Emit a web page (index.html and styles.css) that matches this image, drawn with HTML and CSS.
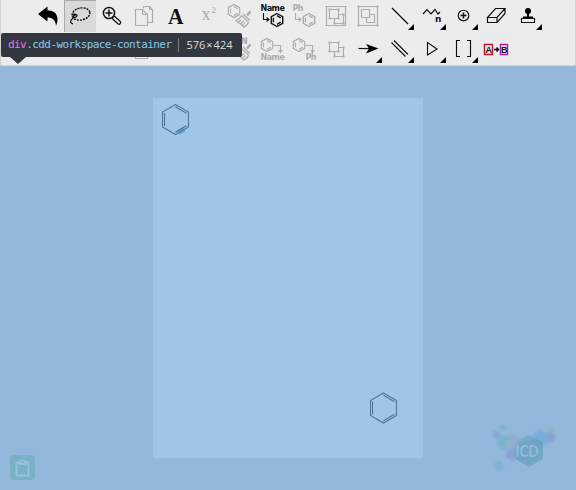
FILE: index.html
```html
<!DOCTYPE html>
<html lang="en">
<head>
<meta charset="utf-8">
<title>Chemical sketcher</title>
<link rel="stylesheet" href="styles.css">
</head>
<body>
<svg class="defs" width="0" height="0">
  <defs>
    <g id="hex"><path d="M0-6.500 5.700-3.300V3.300L0 6.500-5.700 3.300V-3.300Z"/><path d="M-3.600-2.200V2.200M0-4.400 3.700-2.200M0 4.400 3.700 2.200"/></g>
    <g id="pages"><path d="M15.500 8.500V6.500H21.500L24.500 9.500V22.500H20M21.500 6.500V9.500H24.500M7.500 9.500H14.500L19.500 14.500V25.500H7.500ZM14.500 9.500V14.500H19.500"/></g>
    <g id="broom"><path class="handle-bar" d="M26.500 11.500 23 15.500"/><path d="M19 14 26 20.500M17.500 15.500 24.500 22M17.500 15.500C16 18.500 14 20 12 20.500L20 27C22 26 24 24 24.500 22M14.500 22 17 20M16.500 24 20 20.500M18.500 25.500 21 22.500"/></g>
    <g id="nodes"><path d="M9.500 9.500H18.500V18.500H9.500ZM18.500 14.500H23.500V23.500H14.500V18.500"/><path class="dots" d="M8.500 8.500h2v2h-2zM17.500 8.500h2v2h-2zM8.500 17.500h2v2h-2zM17.500 17.500h2v2h-2zM22.500 13.500h2v2h-2zM22.500 22.500h2v2h-2zM13.500 22.500h2v2h-2z"/></g>
    <path id="more" class="solid" d="M30 24V30H24Z"/>
  </defs>
</svg>
<header class="toolbar">
  <div class="row">
    <button class="tool"><svg viewBox="0 0 32 32"><path class="solid" d="M6 14 15.500 6.500V10.500C24 10 28 17 24 26C24 20 20 17.500 15.500 17.500V21.500Z"/></svg></button>
    <button class="tool selected"><svg viewBox="0 0 32 32"><ellipse class="dash" cx="17" cy="14" rx="9" ry="6" transform="rotate(-12 17 14)"/><path d="M8 15C11 13 15 15 12 17C9 18 8 15 12 15M12 17C8 18 4 22 9 24"/></svg></button>
    <button class="tool"><svg viewBox="0 0 32 32"><path class="handle" d="M18 18 23 22.500"/><path class="handle-inner" d="M18 18 23 22.500"/><circle class="thick" cx="13" cy="13" r="5.600"/><path class="thick" d="M9.500 13H16.500M13 9.500V16.500"/></svg></button>
    <button class="tool off"><svg viewBox="0 0 32 32"><use href="#pages"/></svg></button>
    <button class="tool"><svg viewBox="0 0 32 32"><text class="letter" x="8" y="24" textLength="15.500" lengthAdjust="spacingAndGlyphs">A</text></svg></button>
    <button class="tool off"><svg viewBox="0 0 32 32"><text class="sup" x="9.500" y="20">x</text><text class="two" x="19.500" y="13">2</text></svg></button>
    <button class="tool off"><svg viewBox="0 0 32 32"><use href="#hex" x="10" y="11"/><use href="#broom"/></svg></button>
    <button class="tool"><svg viewBox="0 0 32 32"><text class="label" x="4.500" y="11">Name</text><path d="M7.500 13V19.500H13M10.500 17.500 13 19.500 10.500 21.500"/><use class="bold" href="#hex" x="21" y="20"/></svg></button>
    <button class="tool off"><svg viewBox="0 0 32 32"><text class="label" x="4.500" y="11">Ph</text><path d="M7.500 13V19.500H13M10.500 17.500 13 19.500 10.500 21.500"/><use class="bold" href="#hex" x="21" y="20"/></svg></button>
    <button class="tool off"><svg viewBox="0 0 32 32"><path d="M6.500 6.500H25.500V25.500H6.500Z"/><use href="#nodes"/></svg></button>
    <button class="tool off"><svg viewBox="0 0 32 32"><path d="M6.500 6.500H25.500V25.500H6.500ZM9.500 9.500H17.500V17.500H9.500ZM17.500 14.500H22.500V22.500H14.500V17.500"/><path class="dots" d="M5.500 5.500h2v2h-2zM24.500 5.500h2v2h-2zM5.500 24.500h2v2h-2zM24.500 24.500h2v2h-2z"/></svg></button>
    <button class="tool"><svg viewBox="0 0 32 32"><path d="M8 8 24 24"/><use href="#more"/></svg></button>
    <button class="tool"><svg viewBox="0 0 32 32"><path d="M7 14 11 9.500 15 14 19 9.500 22 14 24 12"/><text class="n" x="19" y="22">n</text><use href="#more"/></svg></button>
    <button class="tool"><svg viewBox="0 0 32 32"><circle cx="15.500" cy="15.500" r="5.300"/><path class="thick" d="M12.500 15.500H18.500M15.500 12.500V18.500"/><use href="#more"/></svg></button>
    <button class="tool"><svg viewBox="0 0 32 32"><path d="M7.500 17.500 15.500 8.500H25L17 17.500ZM7.500 17.500V22.500H17V17.500M17 22.500 25 13.500V8.500"/></svg></button>
    <button class="tool"><svg viewBox="0 0 32 32"><circle class="solid" cx="16" cy="11" r="3"/><path class="solid" d="M15 12H17V18H15ZM11 16.500H21V18.500H11Z"/><path d="M9.500 18.500H22.500V22.500H9.500Z"/><use href="#more"/></svg></button>
  </div>
  <div class="row">
    <button class="tool"></button>
    <button class="tool"></button>
    <button class="tool"></button>
    <button class="tool off"><svg viewBox="0 0 32 32"><use href="#pages"/></svg></button>
    <button class="tool"></button>
    <button class="tool"></button>
    <button class="tool off"><svg viewBox="0 0 32 32"><text class="label" x="17" y="11">N</text><use href="#broom"/></svg></button>
    <button class="tool off"><svg viewBox="0 0 32 32"><use href="#hex" x="11" y="12"/><path d="M17 12.500H24.500V19M22.500 17 24.500 19.500 26.500 17"/><text class="label" x="4.500" y="27">Name</text></svg></button>
    <button class="tool off"><svg viewBox="0 0 32 32"><use href="#hex" x="11" y="12"/><path d="M17 12.500H24.500V19M22.500 17 24.500 19.500 26.500 17"/><text class="label" x="17.500" y="27">Ph</text></svg></button>
    <button class="tool off"><svg viewBox="0 0 32 32"><use href="#nodes"/></svg></button>
    <button class="tool"><svg viewBox="0 0 32 32"><path d="M6.500 15.500H22"/><path class="solid" d="M14 11 26.500 15.500 14 20.500 17 15.500Z"/><use href="#more"/></svg></button>
    <button class="tool"><svg viewBox="0 0 32 32"><path d="M7.500 9.500 21.500 23.500M10 7.500 24 21.500"/><use href="#more"/></svg></button>
    <button class="tool"><svg viewBox="0 0 32 32"><path d="M11.500 9.500V22L21 16Z"/><use href="#more"/></svg></button>
    <button class="tool"><svg viewBox="0 0 32 32"><path d="M12 7.500H8.500V23.500H12M19 7.500H22.500V23.500H19"/><use href="#more"/></svg></button>
    <button class="tool"><svg viewBox="0 0 32 32"><path class="red" d="M4.500 11.500H12.500V21.500H4.500Z"/><path class="purple" d="M20.500 11.500H27.500V21.500H20.500Z"/><text class="ab" x="5.500" y="20">A</text><text class="ab" x="21" y="20">B</text><path class="thick" d="M14 16.500H18M16.500 14.500 18.500 16.500 16.500 18.500"/></svg></button>
    <button class="tool"></button>
  </div>
  <div class="tip"><span class="tag">div</span><span class="name">.cdd-workspace-container</span><span class="size">576<span class="times">×</span>424</span></div>
</header>
<main class="workspace">
  <div class="paper">
    <svg class="molecule first" viewBox="0 0 30 32"><path class="hover" d="M18 28.500 24.500 25"/><path d="M15.500 .5 28.500 8V23L15.500 30.500 2.500 23V8ZM4.500 9V22M15.500 2.800 26.500 9.200M15.500 28.200 26.500 21.800"/></svg>
    <svg class="molecule second" viewBox="0 0 30 32"><path d="M15.500 1 28.500 8.500V23.500L15.500 31 2.500 23.500V8.500ZM4.500 9.500V22.500M15.500 3.300 26.500 9.700M15.500 28.700 26.500 22.300"/></svg>
  </div>
  <button class="clipboard"><svg width="25" height="25" viewBox="0 0 25 25"><path d="M9.500 7.500H6.500V20.500H18.500V7.500H15.500M9.500 9H15.500V7H14.500C14.500 4.500 10.500 4.500 10.500 7H9.500Z"/></svg></button>
  <svg class="logo" viewBox="0 0 70 50">
    <defs><linearGradient id="teal" x2="1" y2="1"><stop stop-color="#82b5ce"/><stop offset=".5" stop-color="#669fc1"/><stop offset="1" stop-color="#6fabbd"/></linearGradient></defs>
    <g class="blobs">
    <path fill="#91a9da" d="M22 10 31 15V26L22 31 13 25V15Z"/>
    <path fill="#72b4c5" d="M13 12 20 15V23L13 27 7 23V15Z"/>
    <path fill="#849ed0" d="M22 24 29 28V34L22 38 16 34V28Z"/>
    <path fill="#93aec5" d="M20 15 26 19 24 25H17L15 20Z"/>
    <path fill="#70abdd" d="M50 6 60 11V19L52 24 42 18V11Z"/>
    <path fill="#91afc9" d="M61 3 65 5V10L61 12 57 10V5Z"/>
    <circle fill="#839fd1" cx="60" cy="14" r="5.200"/>
    <circle fill="#80a1d6" cx="6.500" cy="11.500" r="3.800"/>
    <circle fill="#74b0c6" cx="13" cy="4.500" r="3"/>
    <circle fill="#77b2d5" cx="9" cy="43" r="5"/>
    </g>
    <g class="badge">
    <path fill="url(#teal)" d="M38 12 53 19V36L39 44 25 36V19Z"/>
    <path fill="#64a0bf" opacity=".6" d="M38 16 48 21V34L39 39 29 34V21Z"/></g>
    <text x="25.500" y="34" textLength="23" lengthAdjust="spacingAndGlyphs">ICD</text>
  </svg>
</main>
</body>
</html>
```
FILE: styles.css
```css
* { box-sizing: border-box; }
body { margin: 0; width: 576px; height: 490px; overflow: hidden; background: #94b8db; font-family: "Open Sans", sans-serif; }
.defs { position: absolute; }
.toolbar { position: relative; height: 66px; background: #ececec; border: 1px solid #d2d2d2; border-top: 0; padding-left: 31px; }
.row { display: flex; height: 33px; }
.tool { width: 32px; height: 32px; padding: 0; border: 0; background: none; color: #111; }
.tool svg { display: block; width: 32px; height: 32px; overflow: visible; fill: none; stroke: currentColor; stroke-width: 1.15; }
.tool.off { color: #adadad; }
.tool.selected { background: #d9d9d9; border-top: 1px solid #aaa; border-left: 1px solid #aaa; }
.selected svg { margin: -1px 0 0 -1px; }
.tool text { stroke: none; fill: currentColor; }
.solid { fill: #000; stroke: none; }
.dots { fill: currentColor; stroke: none; }
.thick { stroke-width: 1.5; }
.bold { stroke-width: 1.4; }
.handle-bar { stroke-width: 2.5; }
.dash { stroke-width: 1.4; stroke-dasharray: 2 1; }
.handle { stroke-width: 4.5; stroke-linecap: round; }
.handle-inner { stroke: #ececec; stroke-width: 2; stroke-linecap: round; }
.label { font: bold 8px "DejaVu Sans", sans-serif; letter-spacing: -.5px; }
.letter { font: bold 23px "Liberation Serif", serif; }
.sup { font: 18px "Liberation Serif", serif; }
.two { font: 9px "Liberation Serif", serif; }
.n { font: bold 9px "DejaVu Sans", sans-serif; }
.ab { font: bold 9px "Liberation Sans", sans-serif; }
.red { stroke: #bd1029; stroke-width: 1.4; }
.purple { stroke: #b315b3; stroke-width: 1.4; }
.tip { position: absolute; left: 0; top: 33px; width: 241px; height: 24px; padding: 0 0 1px 7px; display: flex; align-items: center; border-radius: 2px; background: #333740; font: 11px "DejaVu Sans Mono", monospace; white-space: nowrap; }
.tip::after { content: ""; position: absolute; left: 9px; top: 24px; border: 8px solid transparent; border-top: 7px solid #333740; border-bottom: 0; }
.tag { color: #e776e0; letter-spacing: -.57px; }
.name { color: #86c9ef; letter-spacing: -.57px; }
.size { margin-left: 7px; padding-left: 7px; border-left: 1px solid #737780; color: #dedede; font: 11px/14px "Open Sans", sans-serif; }
.times { margin: 0 1px; }
.workspace { position: relative; height: 424px; padding: 32px 0 0 153px; background: #94b8db; }
.paper { display: flex; flex-direction: column; justify-content: space-between; width: 270px; height: 360px; padding: 6px 25px 34px 7px; background: #9fc5e8; }
.molecule { width: 30px; height: 32px; fill: none; stroke: #507798; stroke-width: 1.1; }
.second { align-self: flex-end; }
.molecule .hover { stroke: #6fa5e1; stroke-width: 5; }
.clipboard { position: absolute; left: 10px; top: 389px; width: 25px; height: 25px; padding: 0; border: 0; border-radius: 4px; background: #79b1c6; }
.clipboard svg { display: block; fill: none; stroke: #97bfe4; stroke-width: 1.8; }
.logo { position: absolute; left: 490px; top: 357px; width: 70px; height: 50px; }
.blobs { filter: blur(.8px); opacity: .75; }
.badge { filter: blur(.7px); opacity: .8; }
.logo text { font: bold 17px Lato, sans-serif; fill: #91bbd8; }
```
